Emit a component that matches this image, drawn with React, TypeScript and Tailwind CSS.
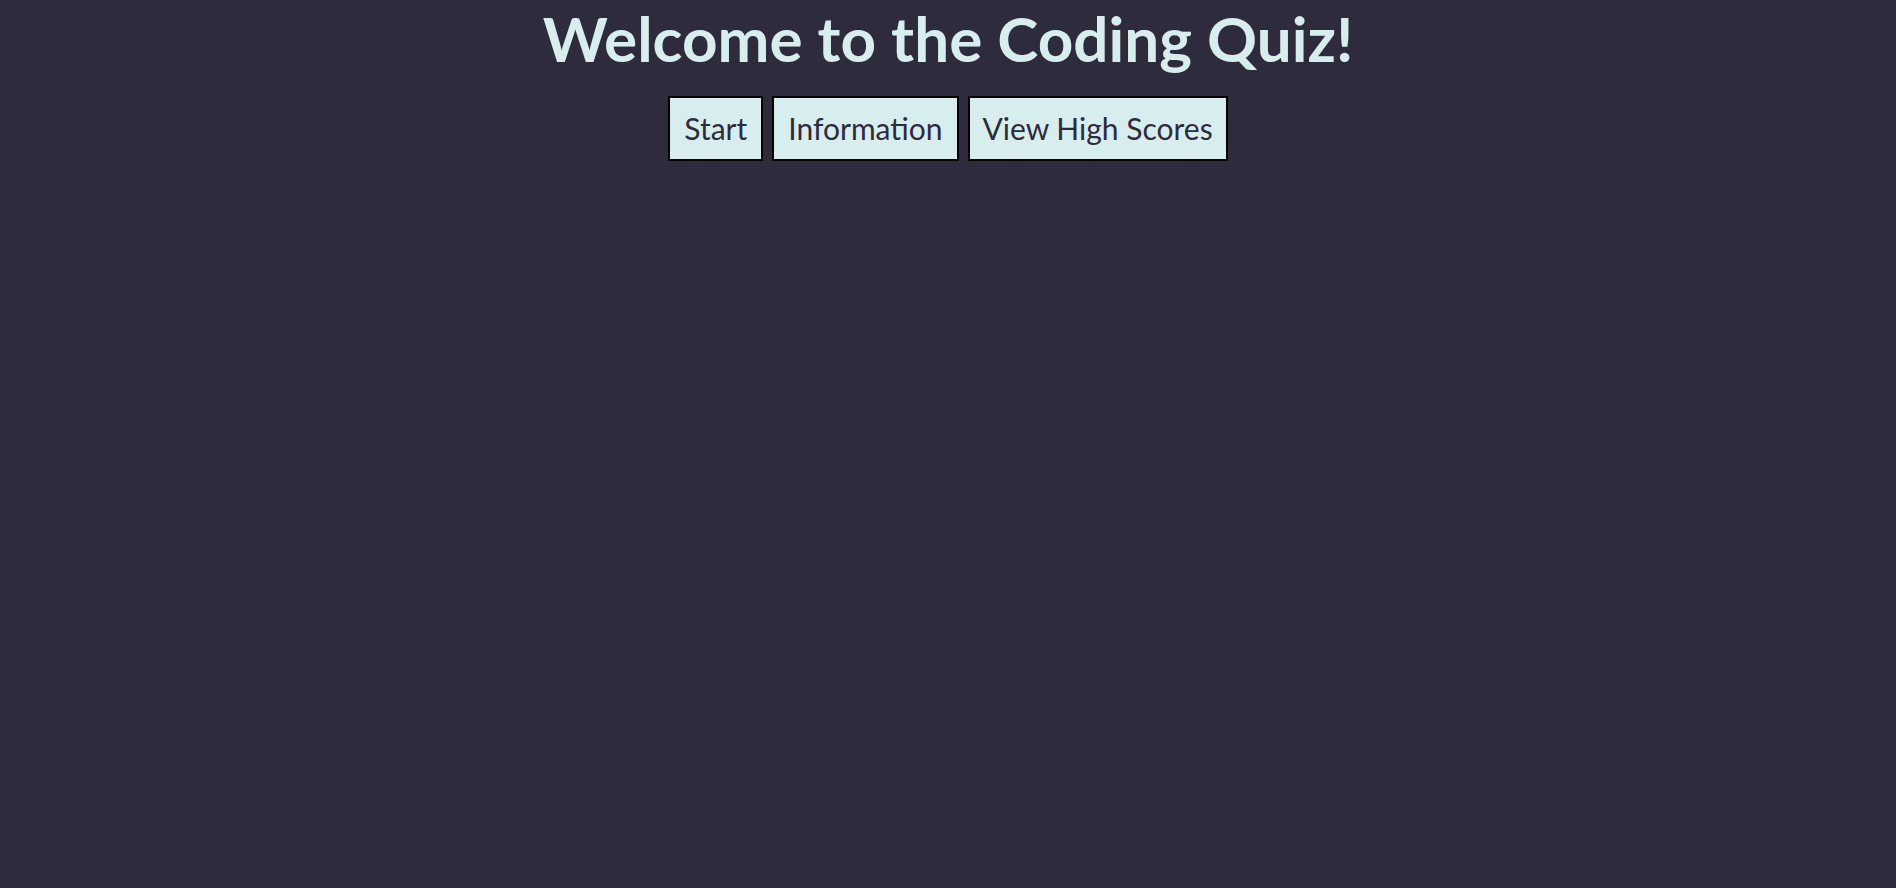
export default function App() {
  return (
    <div className="min-h-screen w-full bg-[#2e2b3d] font-['Trebuchet_MS','Lato',sans-serif] flex flex-col items-center">
      <h1 className="mt-[2px] text-[62px] leading-[72px] font-bold text-[#d8eeee]">
        Welcome to the Coding Quiz!
      </h1>
      <div className="mt-[22px] flex gap-[9px]">
        <button className="h-[65px] px-[14px] border-2 border-black bg-[#d8eeee] text-[#2e2b3d] text-[30px]">
          Start
        </button>
        <button className="h-[65px] px-[14px] border-2 border-black bg-[#d8eeee] text-[#2e2b3d] text-[30px]">
          Information
        </button>
        <button className="h-[65px] px-[13px] border-2 border-black bg-[#d8eeee] text-[#2e2b3d] text-[30px]">
          View High Scores
        </button>
      </div>
    </div>
  );
}
